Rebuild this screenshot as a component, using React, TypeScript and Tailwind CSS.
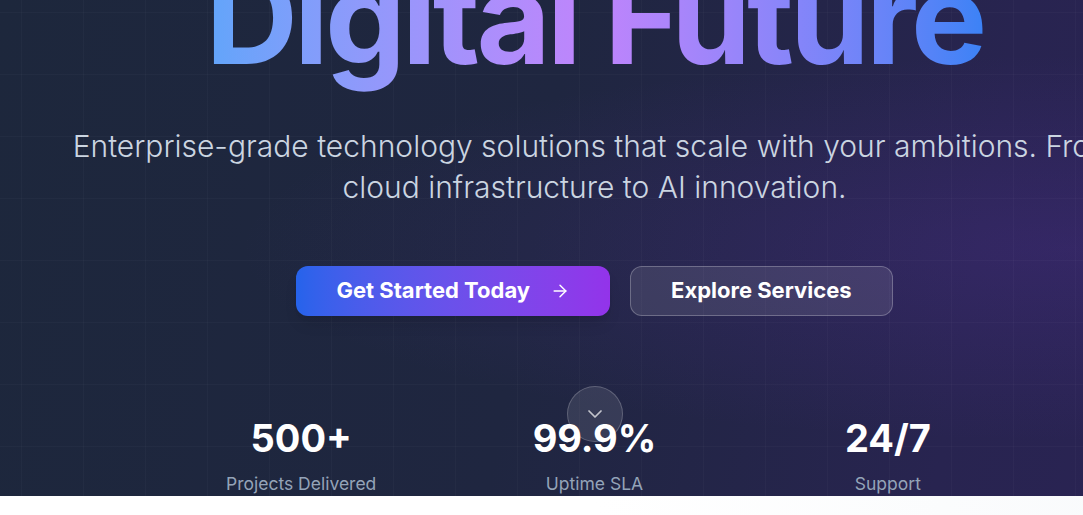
import { ArrowRight, ChevronDown } from 'lucide-react'

export default function App() {
  const stats = [
    { value: '500+', label: 'Projects Delivered' },
    { value: '99.9%', label: 'Uptime SLA' },
    { value: '24/7', label: 'Support' }
  ]

  return (
    <div className="w-full overflow-hidden bg-white font-['Inter','Noto_Sans',sans-serif]">
      <div className="w-[1189px]">
        {/* Hero */}
        <section className="relative h-[496px] overflow-hidden bg-[linear-gradient(100deg,#1d273c_0%,#1f2640_45%,#282450_80%,#2a2354_100%)]">
          {/* Glow + grid */}
          <div className="absolute inset-0 bg-[radial-gradient(ellipse_at_90%_50%,rgba(88,50,160,0.25),transparent_55%)]"></div>
          <div className="absolute inset-0 bg-[linear-gradient(to_right,rgba(255,255,255,0.025)_1px,transparent_1px),linear-gradient(to_bottom,rgba(255,255,255,0.025)_1px,transparent_1px)] bg-[size:62px_62px] bg-[position:21px_12px]"></div>

          <div className="relative z-10 flex flex-col items-center text-center">
            <h1 className="-mt-[46px] pb-[24px] text-[128px] font-bold leading-none tracking-[-0.03em] bg-gradient-to-r from-[#60a5fa] via-[#c084fc] to-[#3b82f6] bg-clip-text text-transparent">
              Digital Future
            </h1>

            <p className="mt-[20px] max-w-[1080px] text-3xl font-light leading-snug text-[#cbd5e1]">
              Enterprise-grade technology solutions that scale with your ambitions. From cloud infrastructure to AI innovation.
            </p>

            <div className="mt-[57px] flex items-center gap-5">
              <button className="flex h-[50px] items-center rounded-xl bg-gradient-to-r from-[#2563eb] to-[#9333ea] px-10 text-[22px] font-bold text-white shadow-lg">
                Get Started Today
                <ArrowRight className="ml-5 h-5 w-5" strokeWidth={1.75} />
              </button>
              <button className="flex h-[50px] items-center rounded-xl border border-white/25 bg-white/10 px-10 text-[22px] font-bold text-white">
                Explore Services
              </button>
            </div>

            {/* Stats */}
            <div className="mt-[101px] grid w-[880px] grid-cols-3">
              {stats.map((stat) => (
                <div key={stat.label} className="flex flex-col items-center">
                  <div className="text-[38px] font-bold leading-[42px] text-white">{stat.value}</div>
                  <div className="mt-[13px] text-[17.5px] leading-6 text-[#94a3b8]">{stat.label}</div>
                </div>
              ))}
            </div>
          </div>

          {/* Scroll indicator */}
          <div className="absolute bottom-[54px] left-1/2 z-20 flex h-14 w-14 -translate-x-1/2 items-center justify-center rounded-full border border-white/20 bg-white/10">
            <ChevronDown className="h-6 w-6 text-white/70" strokeWidth={1.75} />
          </div>
        </section>

        <section className="h-[40px] bg-gradient-to-r from-white via-white to-slate-50"></section>
      </div>
    </div>
  )
}
